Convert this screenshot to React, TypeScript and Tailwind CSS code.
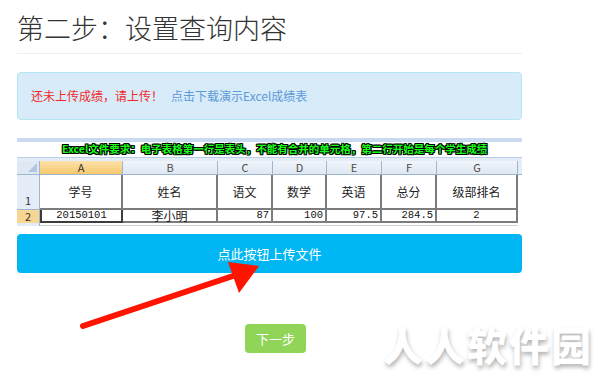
import React from "react";

const cols = [
  { key: "A", w: "w-[83px]", head: "学号", val: "20150101", align: "center" },
  { key: "B", w: "w-[95px]", head: "姓名", val: "李小明", align: "center" },
  { key: "C", w: "w-[55px]", head: "语文", val: "87", align: "right" },
  { key: "D", w: "w-[54px]", head: "数学", val: "100", align: "right" },
  { key: "E", w: "w-[55px]", head: "英语", val: "97.5", align: "right" },
  { key: "F", w: "w-[55px]", head: "总分", val: "284.5", align: "right" },
  { key: "G", w: "w-[81px]", head: "级部排名", val: "2", align: "center" },
];

const cjk = "font-['Microsoft_YaHei','Noto_Sans_CJK_SC',sans-serif]";
const sheet = "font-['SimSun','Noto_Sans_CJK_SC',serif]";
const mono = "font-['Liberation_Mono','Noto_Sans_CJK_SC',monospace]";

function ExcelPreview() {
  return (
    <div className="flex w-[505px] flex-col bg-white">
      <div className="h-[4px] bg-[#c9daf0]" />
      <div className="flex h-[15px] items-center pl-[45px]">
        <span
          className={`${cjk} whitespace-nowrap text-[10.5px] leading-none font-bold text-[#19ff19] [text-shadow:1px_0_0_#000,-1px_0_0_#000,0_1px_0_#000,0_-1px_0_#000,1px_1px_0_#000,-1px_-1px_0_#000,1px_-1px_0_#000,-1px_1px_0_#000]`}
        >
          Excel文件要求：电子表格第一行是表头，不能有合并的单元格，第二行开始是每个学生成绩
        </span>
      </div>
      <div className="h-[4px] border-t border-[#b9cde6] bg-[#e3ecf7]" />

      {/* column letters */}
      <div className="flex h-[14px] border-b border-[#9eb6ce]">
        <div className="relative w-[23px] border-r border-[#9eb6ce] bg-[#dfe8f5]">
          <svg className="absolute right-[2px] bottom-[2px]" width="9" height="9" viewBox="0 0 9 9">
            <polygon points="9,0 9,9 0,9" fill="#b3c6dd" />
          </svg>
        </div>
        {cols.map((c) => (
          <div
            key={c.key}
            className={`${c.w} ${sheet} flex items-center justify-center border-r border-[#9eb6ce] text-[11px] leading-none ${
              c.key === "A"
                ? "bg-gradient-to-b from-[#fbe2aa] to-[#f6c86c] text-[#333]"
                : "bg-gradient-to-b from-[#f1f5fb] to-[#dde7f3] text-[#4a4a4a]"
            }`}
          >
            {c.key}
          </div>
        ))}
        <div className="flex-1 bg-[#e4ecf6]" />
      </div>

      {/* row 1 */}
      <div className="flex h-[35px]">
        <div className={`${sheet} flex w-[23px] items-end justify-center border-r border-b border-[#9eb6ce] bg-[#e4ecf7] pb-[3px] text-[11px] leading-none text-[#333]`}>
          1
        </div>
        {cols.map((c) => (
          <div
            key={c.key}
            className={`${c.w} ${cjk} flex items-center justify-center border-r-2 border-b-2 border-[#7c7c7c] text-[12px] text-[#222]`}
          >
            {c.head}
          </div>
        ))}
      </div>

      {/* row 2 */}
      <div className="flex h-[13px]">
        <div className={`${sheet} flex w-[23px] items-center justify-center border-r border-[#9eb6ce] bg-[#f7d593] text-[11px] leading-none text-[#333]`}>
          2
        </div>
        {cols.map((c) => (
          <div
            key={c.key}
            className={`${c.w} flex items-center border-r-2 border-b-2 text-[10.5px] leading-none text-[#111] ${
              c.key === "A" ? "border-l-2 border-[#3c3c3c]" : "border-[#7c7c7c]"
            } ${c.align === "right" ? "justify-end pr-[2px]" : "justify-center"} ${c.key === "B" ? cjk + " text-[12px]" : mono}`}
          >
            {c.val}
          </div>
        ))}
      </div>
      <div className="flex h-[3px]">
        <div className="w-[23px] border-r border-[#9eb6ce] bg-[#e4ecf7]" />
        <div className="w-[478px] border-b border-[#d0d0d0]" />
      </div>
    </div>
  );
}

export default function App() {
  return (
    <div className="relative h-[378px] w-[600px] overflow-hidden bg-white">
      <div className="flex w-[505px] flex-col pt-[11px] ml-[17px]">
        <h1 className={`${cjk} text-[27px] leading-[34px] font-light text-[#333]`}>第二步：设置查询内容</h1>
        <div className="mt-[8px] h-px bg-[#eeeeee]" />

        <div className="mt-[18px] flex h-[48px] items-center gap-[8px] rounded-[4px] border border-[#b3e5f5] bg-[#d8ebf8] pl-[13px] text-[12px]">
          <span className={`${cjk} text-[#f22a2a]`}>还未上传成绩，请上传！</span>
          <span className={`${cjk} text-[#5b9ad8]`}>点击下载演示Excel成绩表</span>
        </div>

        <div className="mt-[18px]">
          <ExcelPreview />
        </div>

        <button
          className={`${cjk} mt-[8px] flex h-[39px] w-full items-center justify-center rounded-[4px] bg-[#00b6f3] text-[13px] text-white`}
        >
          点此按钮上传文件
        </button>

        <div className="mt-[51px] flex pl-[228px]">
          <button
            className={`${cjk} flex h-[29px] w-[61px] items-center justify-center rounded-[4px] bg-[#90d458] text-[13px] text-white`}
          >
            下一步
          </button>
        </div>
      </div>

      {/* red arrow annotation */}
      <svg className="pointer-events-none absolute top-0 left-0" width="600" height="378" viewBox="0 0 600 378">
        <line x1="83" y1="326" x2="236" y2="275" stroke="#ff1400" strokeWidth="6" strokeLinecap="round" />
        <polygon points="228,262 259,266 239,293" fill="#ff1400" />
      </svg>

      {/* watermark */}
      <div
        className={`${cjk} pointer-events-none absolute top-[320px] left-[383px] text-[40px] leading-[48px] font-black tracking-[2px] text-white [text-shadow:1px_3px_4px_rgba(0,0,0,0.3)]`}
      >
        人人软件园
      </div>
    </div>
  );
}
